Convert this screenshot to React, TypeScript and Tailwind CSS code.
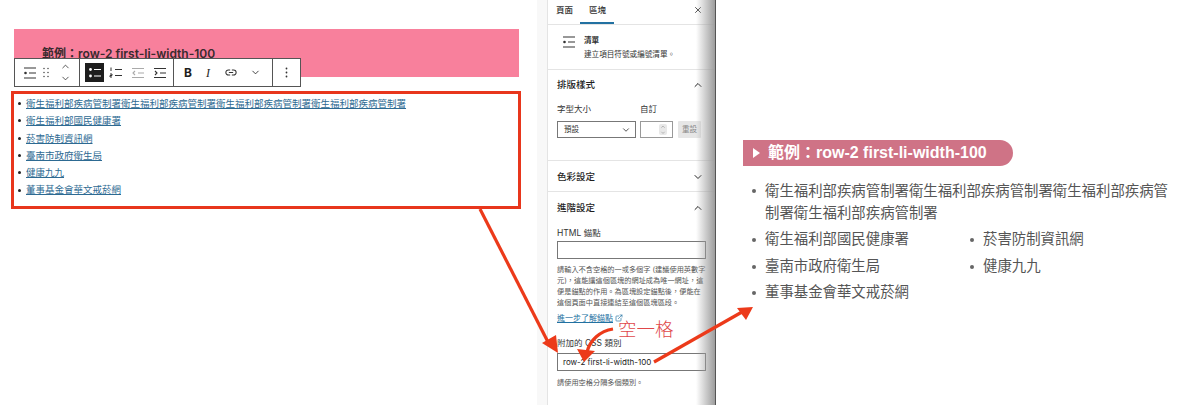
import { ChevronDown, ChevronUp, ExternalLink, X } from 'lucide-react';

const cjk = { fontFamily: 'Inter, "Noto Sans CJK TC", sans-serif' };

const links = ['衛生福利部疾病管制署衛生福利部疾病管制署衛生福利部疾病管制署衛生福利部疾病管制署', '衛生福利部國民健康署', '菸害防制資訊網', '臺南市政府衛生局', '健康九九', '董事基金會華文戒菸網'];

function Lines({ kind, color = '#333' }: { kind: 'view' | 'bullet' | 'num' | 'out' | 'in'; color?: string }) {
  return (
    <svg width="14" height="14" viewBox="0 0 14 14" fill="none" stroke={color} strokeWidth="1.1">
      {kind === 'view' && <path d="M1 2h12M6 7h7M1 12h12" />}
      {kind === 'view' && <circle cx="2.5" cy="7" r="1.3" fill={color} stroke="none" />}
      {kind === 'bullet' && <path d="M6 3.5h7M6 10h7" />}
      {kind === 'bullet' && <circle cx="2.5" cy="3.5" r="1.4" fill={color} stroke="none" />}
      {kind === 'bullet' && <circle cx="2.5" cy="10" r="1.4" fill={color} stroke="none" />}
      {kind === 'num' && <path d="M6 3.5h7M6 9.5h7M2 1.5v3.5M1 8h2v1.5H1V11h2" strokeWidth="1" />}
      {kind === 'out' && <path d="M1 2.5h12M7 7h6M1 11.5h12M4 5L2 7l2 2" stroke="#aaa" />}
      {kind === 'in' && <path d="M1 2.5h12M7 7h6M1 11.5h12M2 5l2 2-2 2" />}
    </svg>
  );
}

function Toolbar() {
  return (
    <div className="absolute left-[14px] top-[58px] flex h-[29px] w-[287px] items-center border border-[#555] bg-white text-[#1e1e1e]">
      <div className="flex h-full w-[65px] items-center border-r border-[#555] pl-[8px]">
        <Lines kind="view" />
        <svg className="ml-[6px]" width="6" height="11" viewBox="0 0 6 11" fill="#555">
          <circle cx="1" cy="1.5" r=".8" /><circle cx="5" cy="1.5" r=".8" />
          <circle cx="1" cy="5.5" r=".8" /><circle cx="5" cy="5.5" r=".8" />
          <circle cx="1" cy="9.5" r=".8" /><circle cx="5" cy="9.5" r=".8" />
        </svg>
        <div className="ml-[11px] flex flex-col gap-[1px]">
          <ChevronUp size={11} strokeWidth={1.6} />
          <ChevronDown size={11} strokeWidth={1.6} />
        </div>
      </div>
      <div className="flex h-full w-[94px] items-center border-r border-[#555] pl-[5px]">
        <div className="flex h-[19px] w-[19px] items-center justify-center bg-[#1e1e1e]"><Lines kind="bullet" color="#fff" /></div>
        <div className="ml-[5px] flex w-[14px]"><Lines kind="num" /></div>
        <div className="ml-[8px] flex w-[14px]"><Lines kind="out" /></div>
        <div className="ml-[8px] flex w-[14px]"><Lines kind="in" /></div>
      </div>
      <div className="flex h-full w-[99px] items-center border-r border-[#555] pl-[10px]">
        <span className="w-[22px] text-[12px] font-bold" style={{ fontFamily: 'Inter, sans-serif' }}>B</span>
        <span className="w-[19px] text-[12px] italic" style={{ fontFamily: '"Liberation Serif", serif' }}>I</span>
        <svg width="12" height="7" viewBox="0 0 14 8" fill="none" stroke="#333" strokeWidth="1.2">
          <path d="M6 1H4a3 3 0 000 6h2M8 1h2a3 3 0 010 6H8M4.5 4h5" />
        </svg>
        <ChevronDown className="ml-[13px]" size={11} strokeWidth={1.8} />
      </div>
      <div className="flex h-full flex-1 items-center justify-center">
        <svg width="3" height="11" viewBox="0 0 3 11" fill="#333">
          <circle cx="1.5" cy="1.5" r=".9" /><circle cx="1.5" cy="5.5" r=".9" /><circle cx="1.5" cy="9.5" r=".9" />
        </svg>
      </div>
    </div>
  );
}

function PanelHead({ title, open }: { title: string; open?: boolean }) {
  return (
    <div className="flex items-center justify-between pr-[12px] text-[9.5px] font-medium text-[#1e1e1e]">
      <span>{title}</span>
      {open ? <ChevronUp size={12} strokeWidth={2} /> : <ChevronDown size={12} strokeWidth={2} />}
    </div>
  );
}

function Sidebar() {
  return (
    <div className="relative flex h-full w-[179px] bg-[#f8f8f8] pl-[10px]" style={cjk}>
      <div className="h-full w-[169px] border-l border-[#e4e4e4] bg-white text-[#333]">
        <div className="flex h-[25px] items-start border-b border-[#e4e4e4] pl-[8px] pr-[13px] pt-[4px] text-[8.5px] font-medium">
          <span>頁面</span>
          <span className="relative ml-[16px]">
            區塊
            <span className="absolute left-[-9px] top-[18px] h-[2px] w-[34px] bg-[#2271a1]" />
          </span>
          <X className="ml-auto mt-[1px]" size={10} strokeWidth={2} />
        </div>
        <div className="flex h-[45px] border-b border-[#e4e4e4] pl-[14px] pt-[9px]">
          <div className="pt-[1px]"><Lines kind="view" /></div>
          <div className="ml-[8px] text-[7.6px] leading-[14px]">
            <div className="font-bold">清單</div>
            <div>建立項目符號或編號清單。</div>
          </div>
        </div>
        <div className="h-[91px] border-b border-[#e4e4e4] pl-[9px] pt-[8px]">
          <PanelHead title="排版樣式" open />
          <div className="mt-[11px] flex text-[8.5px]">
            <span className="w-[83px]">字型大小</span>
            <span>自訂</span>
          </div>
          <div className="mt-[5px] flex">
            <div className="flex h-[17px] w-[79px] items-center justify-between border border-[#777] pl-[6px] pr-[4px] text-[7.5px]">
              預設 <ChevronDown size={10} strokeWidth={2} />
            </div>
            <div className="ml-[4px] flex h-[17px] w-[33px] items-center justify-end border border-[#999] pr-[5px]">
              <div className="flex h-[11px] w-[8px] flex-col items-center justify-center rounded-[2px] bg-[#e8e8e8] text-[#777]">
                <ChevronUp size={6} strokeWidth={2} />
                <ChevronDown size={6} strokeWidth={2} />
              </div>
            </div>
            <div className="ml-[5px] flex h-[17px] w-[23px] items-center justify-center rounded-[1px] bg-[#e6e6e6] text-[7.5px] text-[#888]">重設</div>
          </div>
        </div>
        <div className="h-[31px] border-b border-[#e4e4e4] pl-[9px] pt-[9px]">
          <PanelHead title="色彩設定" />
        </div>
        <div className="pl-[9px] pr-[9px] pt-[9px]">
          <div className="mr-[-9px]"><PanelHead title="進階設定" open /></div>
          <div className="mt-[12px] text-[8.5px] leading-[12px]">HTML 錨點</div>
          <div className="mt-[2px] h-[18px] w-[149px] border border-[#777]" />
          <p className="mt-[6px] whitespace-nowrap text-[7.2px] leading-[10.8px] text-[#555]">
            請輸入不含空格的一或多個字 (建議使用英數字<br />
            元)，這能讓這個區塊的網址成為唯一網址，這<br />
            便是錨點的作用。為區塊設定錨點後，便能在<br />
            這個頁面中直接連結至這個區塊區段。
          </p>
          <div className="mt-[4px] flex items-center text-[8px] text-[#2271a1]">
            <span className="underline">進一步了解錨點</span>
            <ExternalLink className="ml-[2px]" size={8} />
          </div>
          <div className="mt-[13px] text-[8.5px] leading-[12px]">附加的 CSS 類別</div>
          <div className="mt-[4px] flex h-[18px] w-[149px] items-center border border-[#777] pl-[5px] text-[8px] text-[#222]">row-2 first-li-width-100</div>
          <p className="mt-[6px] text-[7.2px] leading-[11px] text-[#555]">請使用空格分隔多個類別。</p>
        </div>
      </div>
      <div className="pointer-events-none absolute inset-y-0 right-0 w-[20px] border-r border-[#555] bg-gradient-to-r from-transparent to-[#9d9d9d]" />
    </div>
  );
}

export default function App() {
  return (
    <div className="relative flex h-[405px] w-[1200px] overflow-hidden bg-white">
      {/* 編輯區 */}
      <div className="w-[537px] pl-[11px] pt-[29px]" style={cjk}>
        <div className="ml-[3px] h-[48px] w-[505px] bg-[#f8809c] pl-[28px] pt-[16px] text-[12px] font-semibold leading-[18px] text-[#3a2a2e]">
          範例：row-2 first-li-width-100
        </div>
        <div className="mt-[14px] h-[118px] w-[510px] border-[3px] border-[#e8361c] pl-[4px] pt-[1px]">
          <ul className="text-[9.5px] leading-[17.3px]">
            {links.map(t => (
              <li key={t} className="flex items-center">
                <span className="h-[3px] w-[3px] rounded-full bg-[#222]" />
                <span className="ml-[5px] text-[#2d6a92] underline">{t}</span>
              </li>
            ))}
          </ul>
        </div>
      </div>
      <Toolbar />
      <Sidebar />
      {/* 前台結果 */}
      <div className="flex-1 pl-[27px] pt-[140px]" style={{ fontFamily: '"Liberation Sans", "Noto Sans CJK TC", sans-serif' }}>
        <div className="flex h-[26px] w-[270px] items-center rounded-l-[3px] rounded-r-full bg-[#cf7386] pl-[10px] text-[16px] font-bold text-white">
          <svg width="7" height="10" viewBox="0 0 7 10" fill="#fff"><path d="M0 0l7 5-7 5z" /></svg>
          <span className="ml-[8px]">範例：row-2 first-li-width-100</span>
        </div>
        <div className="mt-[14px] w-[436px] pl-[9px] text-[14.4px] text-[#555]">
          <div className="flex pb-[3px] leading-[22px]">
            <span className="mt-[9px] h-[4px] w-[4px] shrink-0 rounded-full bg-[#666]" />
            <span className="ml-[9px]">衛生福利部疾病管制署衛生福利部疾病管制署衛生福利部疾病管制署衛生福利部疾病管制署</span>
          </div>
          <div className="grid grid-cols-[218px_1fr]">
            {links.slice(1).map(t => (
              <div key={t} className="flex h-[26.4px] items-center">
                <span className="h-[4px] w-[4px] shrink-0 rounded-full bg-[#666]" />
                <span className="ml-[9px]">{t}</span>
              </div>
            ))}
          </div>
        </div>
      </div>
      {/* 標註箭頭 */}
      <svg className="pointer-events-none absolute left-0 top-0" width="1200" height="405" fill="none" stroke="#ec3a1a" strokeWidth="3.2">
        <path d="M480 209L549 344" />
        <path fill="#ec3a1a" stroke="none" d="M558 353L542 343L556 335z" />
        <path d="M654 362L742 312" />
        <path fill="#ec3a1a" stroke="none" d="M753 307L737 308L746 320z" />
        <path d="M613 329C600 331 590 340 587 352" />
        <path fill="#ec3a1a" stroke="none" d="M584 362L577 349L595 351z" />
      </svg>
      <div className="absolute left-[618px] top-[316px] text-[18.5px] font-light leading-[24px] text-[#e0484a]" style={{ fontFamily: '"Noto Sans CJK TC", sans-serif' }}>空一格</div>
    </div>
  );
}
